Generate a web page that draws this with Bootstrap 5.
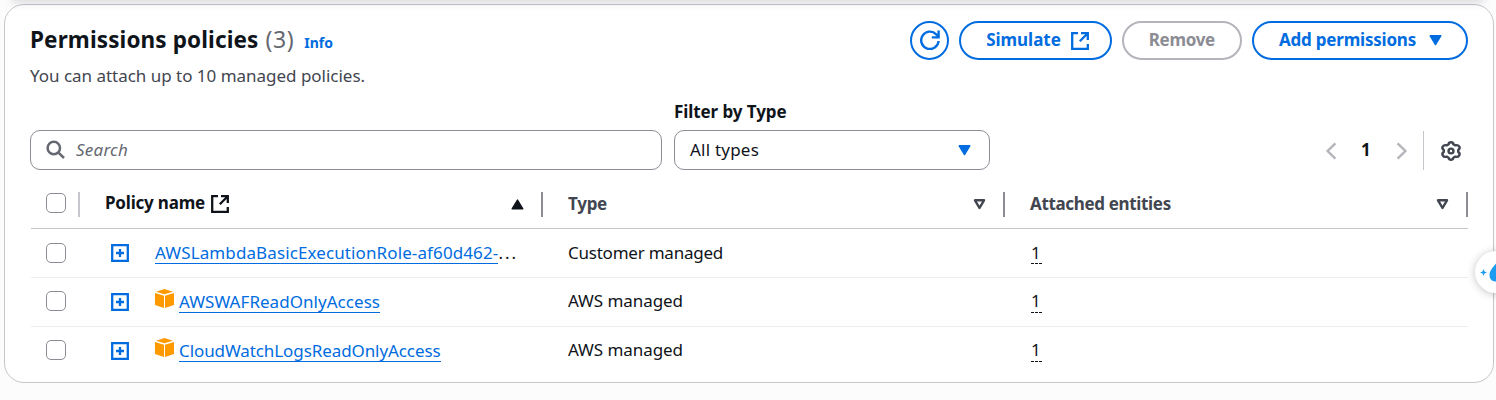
<!DOCTYPE html>
<html lang="en">
<head>
<meta charset="utf-8">
<meta name="viewport" content="width=device-width, initial-scale=1">
<title>Permissions policies</title>
<link href="https://cdn.jsdelivr.net/npm/bootstrap@5.3.0/dist/css/bootstrap.min.css" rel="stylesheet">
<style>
:root{--blue:#006ce0;--ink:#0f141a;--muted:#424650;--edge:#8c8c94;--line:#c6c6cd}
body{font-family:"Noto Sans","Open Sans",sans-serif;font-size:17px;line-height:24px;color:var(--ink);background:#fcfcfd;overflow:hidden;height:400px}
svg{display:block;flex:none}
.panel{margin:4px 2px 0 4px;height:379px;border:1px solid var(--line);border-radius:20px;background:#fff;padding:0 25px}
.topshade{position:absolute;top:-12px;left:14px;right:14px;height:12px;box-shadow:0 1px 9px 2px rgba(0,7,22,.13);pointer-events:none}
.panel-head{padding-top:16px}
.panel h2{font-size:22.5px;line-height:30px;font-weight:700;margin:4px 0 0;letter-spacing:.12px}
.count{font-size:23px;line-height:30px;color:#656871;font-weight:400;letter-spacing:.6px;margin-left:7px}
.info{font-size:14px;font-weight:700;color:var(--blue);text-decoration:none;margin-left:10px}
.desc{color:var(--muted);margin-top:9px;letter-spacing:-.02px}
.pill{--bs-btn-font-size:17px;--bs-btn-font-weight:700;--bs-btn-line-height:24px;--bs-btn-border-radius:20px;--bs-btn-border-width:2px;--bs-btn-padding-y:0;--bs-btn-padding-x:25px;--bs-btn-color:var(--blue);--bs-btn-border-color:var(--blue);--bs-btn-bg:#fff;--bs-btn-disabled-color:#8c8c94;--bs-btn-disabled-border-color:#b4b4bb;--bs-btn-disabled-bg:#fff;--bs-btn-disabled-opacity:1;height:39px;white-space:nowrap}
.pill span{margin-top:-1px}
.round{width:39px;--bs-btn-padding-x:0}
.field{height:40px;border:1px solid var(--edge);border-radius:10px;background:#fff}
.searchbox{width:632px;padding-left:15px}
.searchbox input{font-size:17px;line-height:24px;font-style:italic;letter-spacing:.22px;color:var(--ink)}
.searchbox input::placeholder{color:#656871;opacity:1}
.typebox{width:316px;padding:0 18px 0 15px}
.filter-label{font-weight:700;letter-spacing:-.08px;margin-bottom:6px}
.pager{height:39px}
.grid-table{width:1437px;table-layout:fixed;margin:22px 0 0 1px;--bs-table-bg:transparent;--bs-table-color:var(--ink)}
.grid-table>:not(caption)>*>*{padding:0;border-bottom:1px solid #ebebf0;vertical-align:middle;height:49px;color:var(--ink)}
.grid-table>thead>tr>th{height:36px;border-bottom-color:var(--line);vertical-align:top;color:var(--muted);font-weight:700}
.grid-table>tbody>tr:last-child>td{border-bottom:0}
.grid-table>tbody>tr+tr>td:not(:nth-child(2)){padding-bottom:2px}
.hcell{height:25px;border-right:2px solid var(--edge);padding-left:25px;padding-right:17px}
.hcell.faint{border-color:var(--line)}
.box{appearance:none;width:20px;height:20px;border:1.5px solid var(--edge);border-radius:5px;background:#fff;margin:0 0 0 15px;display:block}
.plink{color:var(--blue);text-decoration:none;border-bottom:1px solid var(--blue);line-height:22px;display:inline-block}
.tight{line-height:21px;padding-top:1px}
.ents{display:inline-block;border-bottom:1px dashed var(--ink);line-height:21px;width:11px;letter-spacing:0}
.grid-table>tbody>tr+tr .ents{line-height:22px}
.helper{position:absolute;left:1475px;top:251px;width:42px;height:42px;border-radius:50%;background:#fff;box-shadow:0 1px 9px rgba(0,0,0,.24)}
</style>
</head>
<body class="position-relative">
<main class="panel">
  <header class="panel-head d-flex justify-content-between align-items-start">
    <div>
      <div class="d-flex align-items-baseline">
        <h2>Permissions policies</h2><span class="count">(3)</span><a class="info" href="#">Info</a>
      </div>
      <div class="desc">You can attach up to 10 managed policies.</div>
    </div>
    <div class="d-flex" style="gap:10px">
      <button class="btn pill round d-flex align-items-center justify-content-center" aria-label="Refresh">
        <svg style="margin-top:-1px" width="20" height="20" viewBox="0 0 20 20" fill="none" stroke="#006ce0" stroke-width="2.400"><path d="M18.600 11A8.700 8.700 0 1 1 16.200 4.300L18.400 6.800"/><path d="M18.600.6v6.800h-6.800"/></svg>
      </button>
      <button class="btn pill d-flex align-items-center"><span style="letter-spacing:-.04px">Simulate</span>
        <svg style="margin-left:10px;margin-right:-4px" width="18" height="18" viewBox="0 0 18 18" fill="none" stroke="#006ce0" stroke-width="2.300"><path d="M7 1.200H1.200v15.600h15.600V12M10 1.200h6.800V8M16.500 1.500 8.800 9.200"/></svg>
      </button>
      <button class="btn pill d-flex align-items-center" disabled><span style="letter-spacing:-.3px">Remove</span></button>
      <button class="btn pill d-flex align-items-center"><span style="letter-spacing:-.21px">Add permissions</span>
        <svg style="margin-left:13px;margin-right:-1px" width="13" height="11" viewBox="0 0 13 11"><path d="M1.200.8h10.600L6.500 9.600z" fill="#006ce0" stroke="#006ce0" stroke-width="1.400" stroke-linejoin="round"/></svg>
      </button>
    </div>
  </header>

  <section class="d-flex align-items-end" style="margin-top:12px">
    <div class="field searchbox d-flex align-items-center">
      <svg width="20" height="20" viewBox="0 0 20 20" fill="none" stroke="#656871" stroke-width="2.500"><circle cx="7.800" cy="8" r="6.200"/><path d="m12.200 12.400 5.800 5.600"/></svg>
      <input class="border-0 p-0 bg-transparent flex-grow-1" style="margin-left:10px" placeholder="Search" aria-label="Search">
    </div>
    <div style="margin-left:12px">
      <div class="filter-label">Filter by Type</div>
      <div class="field typebox d-flex align-items-center justify-content-between">
        <span style="letter-spacing:.22px">All types</span>
        <svg width="13" height="11" viewBox="0 0 13 11"><path d="M1.200.8h10.600L6.500 9.600z" fill="#006ce0" stroke="#006ce0" stroke-width="1.400" stroke-linejoin="round"/></svg>
      </div>
    </div>
    <div class="pager ms-auto d-flex align-items-center">
      <svg width="12" height="18" viewBox="0 0 12 18" fill="none" stroke="#b4b4bb" stroke-width="2.400"><path d="M10.400 1.400 2.600 9l7.800 7.600"/></svg>
      <b style="margin:-1px 0 0 24px;width:10px">1</b>
      <svg style="margin-left:25px" width="12" height="18" viewBox="0 0 12 18" fill="none" stroke="#b4b4bb" stroke-width="2.400"><path d="M1.600 1.400 9.400 9l-7.800 7.600"/></svg>
      <div class="h-100" style="border-left:1px solid #c6c6cd;margin-left:15px"></div>
      <svg style="margin:1px 7px 0 17px" width="20" height="20" viewBox="1 .2 18 18.600" preserveAspectRatio="none" fill="none" stroke="#424650" stroke-width="2.200" stroke-linejoin="round"><path d="M7.900 3.300Q8 1.400 10 1.400t2.100 1.900l1.800 1q2.200-.9 3.400 1t-.8 3.200v2q2 1.300.8 3.200t-3.400 1l-1.800 1q-.1 1.900-2.100 1.900t-2.100-1.900l-1.800-1q-2.200.9-3.400-1t.8-3.200v-2q-2-1.300-.8-3.200t3.400-1z"/><circle cx="10" cy="9.500" r="2.200"/></svg>
    </div>
  </section>

  <table class="table grid-table">
    <colgroup><col style="width:49px"><col style="width:463px"><col style="width:462px"><col style="width:463px"></colgroup>
    <thead>
      <tr>
        <th><div class="hcell faint d-flex align-items-center p-0"><input type="checkbox" class="box" style="margin-top:-3px" aria-label="Select all"></div></th>
        <th><div class="hcell d-flex align-items-center" style="color:#0f141a"><span style="letter-spacing:-.2px;margin-top:-3px">Policy name</span>
          <svg style="margin-left:6px;margin-top:-1px" width="18" height="18" viewBox="0 0 18 18" fill="none" stroke="#0f141a" stroke-width="2.300"><path d="M7 1.200H1.200v15.600h15.600V12M10 1.200h6.800V8M16.500 1.500 8.800 9.200"/></svg>
          <svg class="ms-auto" width="13" height="11" viewBox="0 0 13 11"><path d="M1.200 9.800h10.600L6.500 1z" fill="#0f141a" stroke="#0f141a" stroke-width="1.400" stroke-linejoin="round"/></svg></div></th>
        <th><div class="hcell d-flex align-items-center justify-content-between"><span style="letter-spacing:-.27px;margin-top:-1px">Type</span>
          <svg width="13" height="11" viewBox="0 0 13 11"><path d="M2 1.300h9L6.500 9z" fill="none" stroke="#424650" stroke-width="2.400" stroke-linejoin="round"/></svg></div></th>
        <th><div class="hcell d-flex align-items-center justify-content-between"><span style="letter-spacing:-.34px;margin-top:-1px">Attached entities</span>
          <svg width="13" height="11" viewBox="0 0 13 11"><path d="M2 1.300h9L6.500 9z" fill="none" stroke="#424650" stroke-width="2.400" stroke-linejoin="round"/></svg></div></th>
      </tr>
    </thead>
    <tbody>
      <tr>
        <td><input type="checkbox" class="box" aria-label="Select policy"></td>
        <td><div class="d-flex align-items-center" style="padding-left:31px">
          <svg width="18" height="18" viewBox="0 0 18 18" fill="none" stroke="#006ce0" stroke-width="2.300"><path d="M1.200 1.200h15.600v15.600H1.200zM9 5v8M5 9h8"/></svg>
          <div class="text-nowrap" style="margin-left:26px"><a href="#" class="plink tight" style="letter-spacing:.11px">AWSLambdaBasicExecutionRole-af60d462-</a><span style="letter-spacing:2px">...</span></div></div></td>
        <td style="padding-left:25px;letter-spacing:-.23px">Customer managed</td>
        <td style="padding-left:26px"><span class="ents">1</span></td>
      </tr>
      <tr>
        <td><input type="checkbox" class="box" aria-label="Select policy"></td>
        <td><div class="d-flex align-items-center" style="padding-left:31px">
          <svg width="18" height="18" viewBox="0 0 18 18" fill="none" stroke="#006ce0" stroke-width="2.300"><path d="M1.200 1.200h15.600v15.600H1.200zM9 5v8M5 9h8"/></svg>
          <svg style="margin:-7px 5px 0 26px" width="19" height="19" viewBox="0 0 19 19" fill="#ff9900"><path d="M9.500 0 18 2.700 9.500 5.300 1 2.700zM0 4l9 2.700V19l-9-3zM19 4l-9 2.700V19l9-3z"/></svg>
          <a href="#" class="plink tight" style="letter-spacing:.04px">AWSWAFReadOnlyAccess</a></div></td>
        <td style="padding-left:25px;letter-spacing:-.07px">AWS managed</td>
        <td style="padding-left:26px"><span class="ents">1</span></td>
      </tr>
      <tr>
        <td><input type="checkbox" class="box" aria-label="Select policy"></td>
        <td><div class="d-flex align-items-center" style="padding-left:31px">
          <svg width="18" height="18" viewBox="0 0 18 18" fill="none" stroke="#006ce0" stroke-width="2.300"><path d="M1.200 1.200h15.600v15.600H1.200zM9 5v8M5 9h8"/></svg>
          <svg style="margin:-7px 5px 0 26px" width="19" height="19" viewBox="0 0 19 19" fill="#ff9900"><path d="M9.500 0 18 2.700 9.500 5.300 1 2.700zM0 4l9 2.700V19l-9-3zM19 4l-9 2.700V19l9-3z"/></svg>
          <a href="#" class="plink tight" style="letter-spacing:-.09px">CloudWatchLogsReadOnlyAccess</a></div></td>
        <td style="padding-left:25px;letter-spacing:-.07px">AWS managed</td>
        <td style="padding-left:26px"><span class="ents">1</span></td>
      </tr>
    </tbody>
  </table>
</main>
<div class="topshade"></div>
<div class="helper"><svg width="21" height="42" viewBox="0 0 21 42"><path d="M8.500 18 9.500 20.500l2.500 1-2.500 1-1 2.500-1-2.500-2.500-1 2.500-1z" fill="#1c9cf0"/><path d="M21 12.500c-2.500 3-6.500 7-6.500 11.500s3 6.500 6.500 6.500z" fill="#1c9cf0"/></svg></div>
<script src="https://cdn.jsdelivr.net/npm/bootstrap@5.3.0/dist/js/bootstrap.bundle.min.js"></script>
</body>
</html>
